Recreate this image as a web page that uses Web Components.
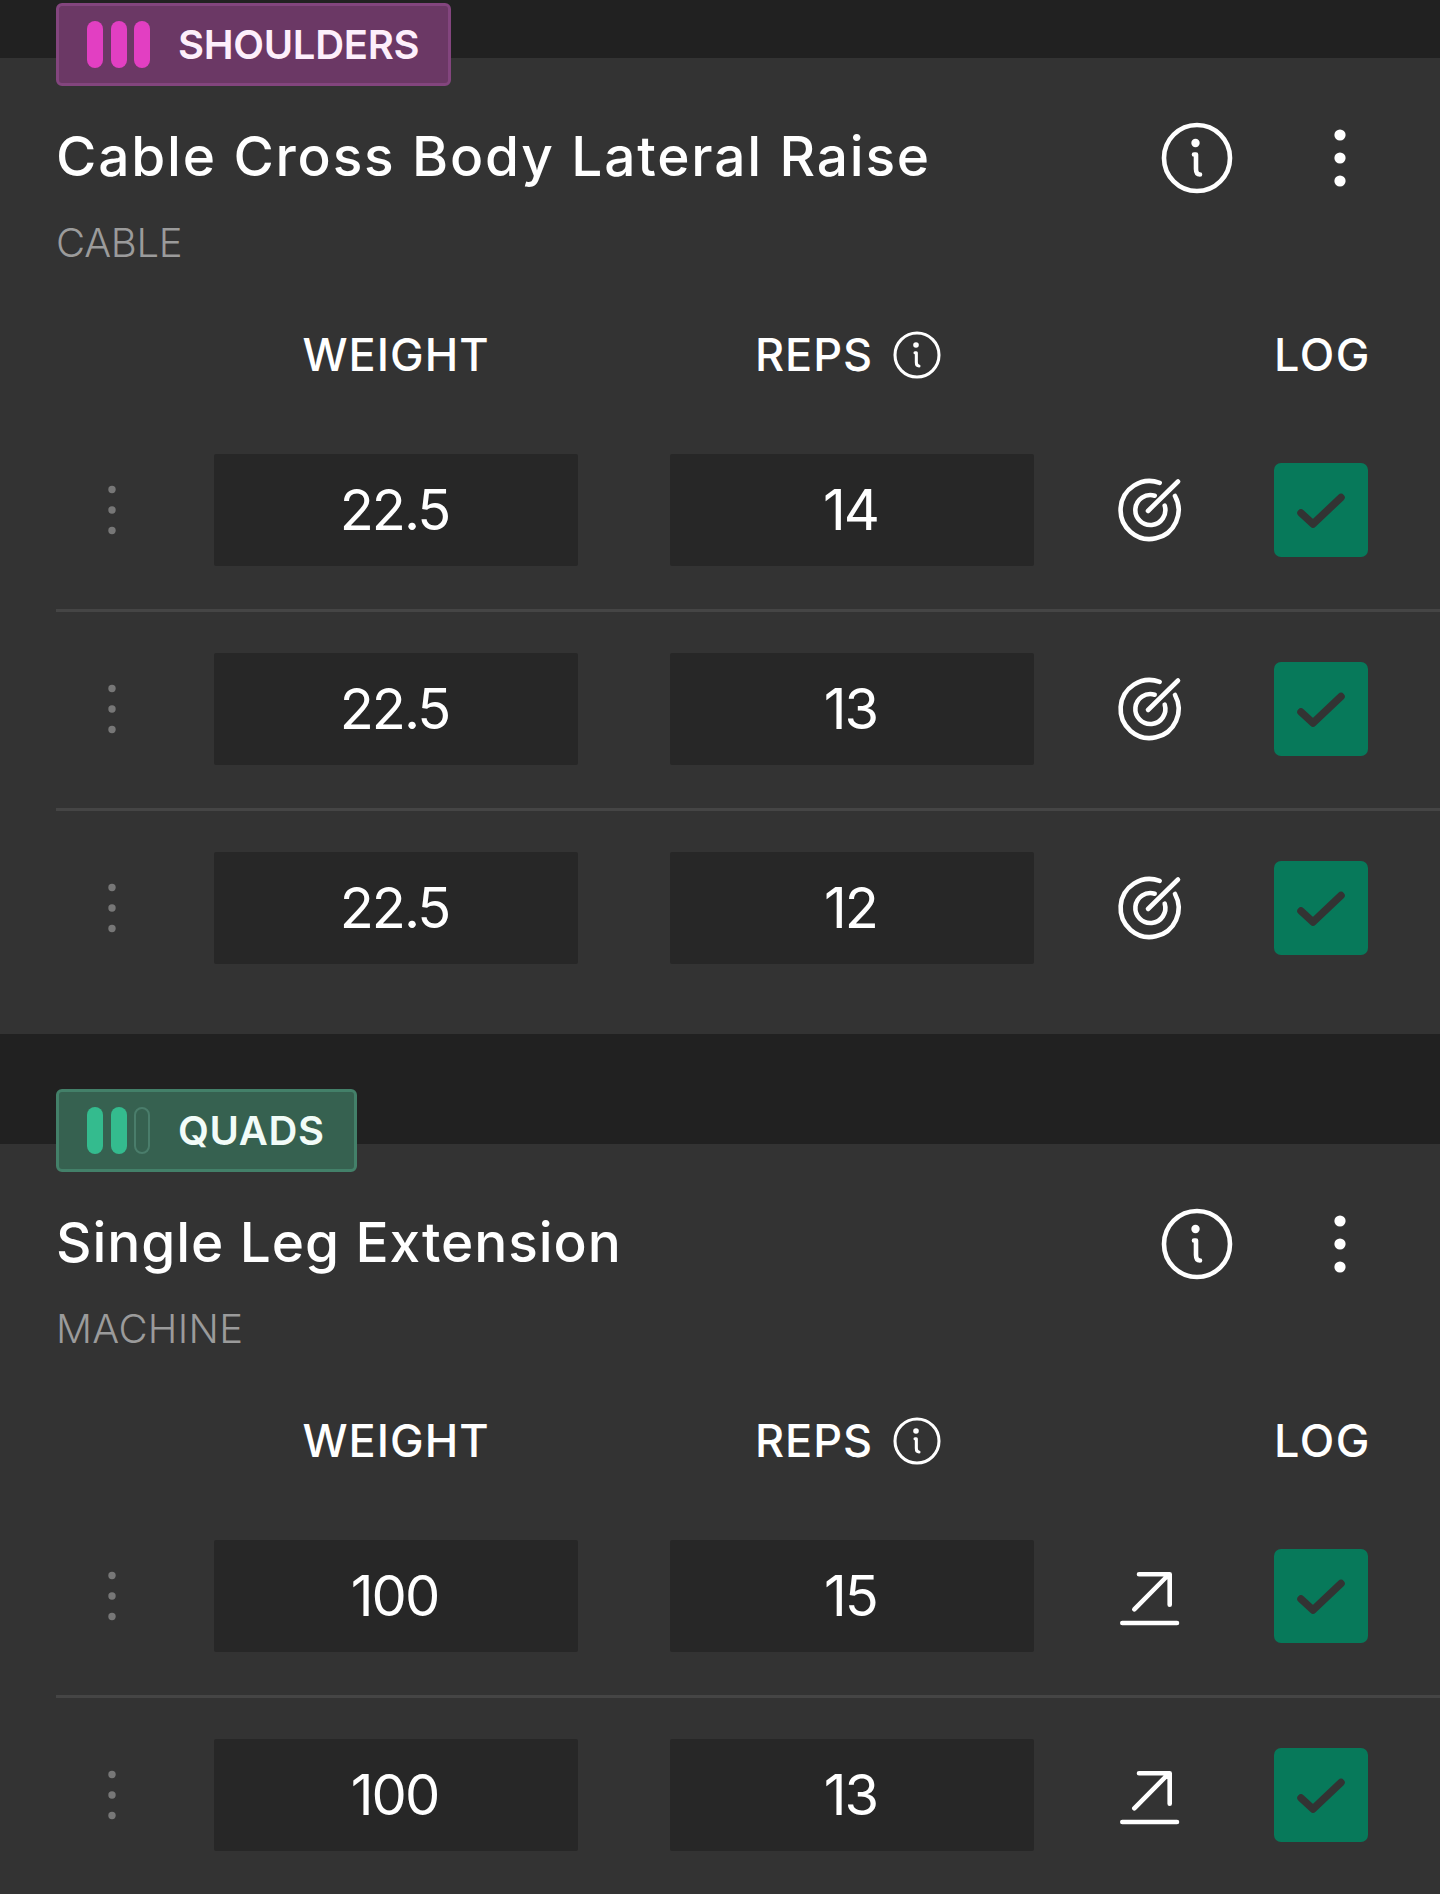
<!DOCTYPE html>
<html>
<head>
<meta charset="utf-8">
<title>Workout</title>
<style>
    html, body { margin: 0; height: 1894px; overflow: hidden; background: #212121; }
    body { font-family: Inter, "Liberation Sans", sans-serif; color: #fff; padding-top: 58px; box-sizing: border-box; }
</style>
</head>
<body>
<exercise-card title-text="Cable Cross Body Lateral Raise" gear="CABLE" style="--title-track:1.83px">
    <muscle-badge slot="badge" filled="3" color="#e23fc2" bg="#6b3865" edge="#83457e" ink="#fdeffb" off="#83457e">SHOULDERS</muscle-badge>
    <set-row weight="22.5" reps="14" icon="target"></set-row>
    <set-row weight="22.5" reps="13" icon="target"></set-row>
    <set-row weight="22.5" reps="12" icon="target" last></set-row>
</exercise-card>
<exercise-card title-text="Single Leg Extension" gear="MACHINE" style="--title-track:0.9px;--gear-track:0.3px;margin-top:110px">
    <muscle-badge slot="badge" filled="2" color="#34bb8e" bg="#366150" edge="#438069" ink="#f2fcf8" off="#4a7d6b" style="letter-spacing:0.6px">QUADS</muscle-badge>
    <set-row weight="100" reps="15" icon="trend"></set-row>
    <set-row weight="100" reps="13" icon="trend"></set-row>
</exercise-card>

<script>
// the shared icons, all on a 72 box
const ICONS = {
    info: `<svg viewBox="0 0 72 72" fill="none" stroke="currentColor" stroke-width="4.6" stroke-linecap="round" stroke-linejoin="round">
        <circle cx="36" cy="36" r="33"/>
        <circle cx="34.5" cy="21" r="4.2" fill="currentColor" stroke="none"/>
        <path d="M33 32.5H35V47Q35 52.5 39 52.5" stroke-width="4.6"/></svg>`,
    dots: `<svg viewBox="0 0 72 72" fill="currentColor">
        <circle cx="36" cy="13" r="5.6"/><circle cx="36" cy="36" r="5.6"/><circle cx="36" cy="59" r="5.6"/></svg>`,
    handle: `<svg viewBox="0 0 72 72" fill="currentColor">
        <circle cx="36" cy="15.5" r="3.7"/><circle cx="36" cy="36" r="3.7"/><circle cx="36" cy="56.5" r="3.7"/></svg>`,
    target: `<svg viewBox="0 0 72 72" fill="none" stroke="currentColor" stroke-width="4.6" stroke-linecap="round">
        <path d="M46.7 8.8A29 29 0 1 0 62 22"/>
        <path d="M41.7 21.7A15 15 0 1 0 51.7 31.7"/>
        <path d="M35 37L65 7.5"/></svg>`,
    trend: `<svg viewBox="0 0 72 72" fill="none" stroke="currentColor" stroke-width="4.6" stroke-linecap="round" stroke-linejoin="round">
        <path d="M21.3 49.3L55.3 15M26 14.3H56.7V44.7M9.3 63H64"/></svg>`,
};

// (CHILD) coloured tag that sits over the top edge of a card
class MuscleBadge extends HTMLElement {
    constructor() {
        super();
        this.attachShadow({ mode: 'open' });
    }

    connectedCallback() {
        const filled = parseInt(this.getAttribute('filled'), 10);
        const bars = [0, 1, 2].map((i) => `<i class="${i < filled ? 'on' : ''}"></i>`).join('');

        this.shadowRoot.innerHTML = `
        <style>
            :host {
                display: inline-flex;
                align-items: center;
                box-sizing: border-box;
                height: 83px;
                padding: 0 29px 0 28px;
                border: 3px solid ${this.getAttribute('edge')};
                border-radius: 6px;
                background: ${this.getAttribute('bg')};
                color: ${this.getAttribute('ink')};
                font-size: 40px;
                font-weight: 600;
                letter-spacing: -0.3px;
            }

            .bars {
                display: flex;
                gap: 7.5px;
                margin-right: 28px;
            }

            i {
                box-sizing: border-box;
                width: 16px;
                height: 47px;
                border-radius: 8px;
                border: 2px solid ${this.getAttribute('off')};
            }

            i.on {
                border: 0;
                background: ${this.getAttribute('color')};
            }
        </style>
        <div class="bars">${bars}</div>
        <slot></slot>`;
    }
}

// (CHILD) one logged set
class SetRow extends HTMLElement {
    constructor() {
        super();
        this.attachShadow({ mode: 'open' });
    }

    connectedCallback() {
        this.shadowRoot.innerHTML = `
        <style>
            :host {
                display: grid;
                grid-template-columns: 158px 364px 456px 230px 10px 94px;
                align-items: center;
                padding: 41px 0 43px;
                border-bottom: 3px solid #454545;
            }

            :host([last]) {
                border-bottom: 0;
            }

            .handle {
                width: 112px;
                height: 72px;
                color: #777;
                display: flex;
                justify-content: center;
            }

            .handle svg {
                width: 72px;
                height: 72px;
            }

            .box {
                display: flex;
                align-items: center;
                justify-content: center;
                box-sizing: border-box;
                width: 364px;
                height: 112px;
                padding: 0 3px 0 0;
                border-radius: 2px;
                background: #272727;
                font-size: 56px;
                font-weight: 400;
                letter-spacing: -2px;
            }

            .box + .box {
                justify-self: end;
            }

            .hint {
                justify-self: center;
                width: 72px;
                height: 72px;
                color: #fff;
            }

            .log {
                grid-column: 6;
                display: flex;
                width: 94px;
                height: 94px;
                border-radius: 7px;
                background: #07795a;
                color: #333;
            }

            svg {
                display: block;
            }
        </style>
        <div class="handle">${ICONS.handle}</div>
        <div class="box">${this.getAttribute('weight')}</div>
        <div class="box">${this.getAttribute('reps')}</div>
        <div class="hint">${ICONS[this.getAttribute('icon')]}</div>
        <div class="log">
            <svg viewBox="0 0 94 94" width="94" height="94" fill="none" stroke="currentColor" stroke-width="7.5" stroke-linecap="round" stroke-linejoin="round">
                <path d="M27 50L39 61L67 34.5"/>
            </svg>
        </div>`;
    }
}

// (PARENT) an exercise: badge, heading, column labels and its sets
class ExerciseCard extends HTMLElement {
    constructor() {
        super();
        this.attachShadow({ mode: 'open' });
    }

    connectedCallback() {
        this.shadowRoot.innerHTML = `
        <style>
            :host {
                display: flow-root;
                padding: 0 0 27px 56px;
                background: #333;
            }

            .badge {
                height: 83px;
                margin-top: -55px;
            }

            .head {
                display: flex;
                align-items: center;
                height: 72px;
                margin-top: 36px;
                padding-right: 64px;
            }

            h1 {
                flex: 1;
                margin: 0 0 5px;
                font-size: 55px;
                font-weight: 500;
                letter-spacing: var(--title-track);
            }

            .icon {
                width: 72px;
                height: 72px;
                margin-left: 71px;
            }

            .gear {
                height: 50px;
                margin-top: 24px;
                line-height: 50px;
                color: #9b9b9b;
                font-size: 40px;
                font-weight: 300;
                letter-spacing: var(--gear-track, -0.3px);
            }

            .labels {
                display: grid;
                grid-template-columns: 158px 364px 456px 240px 94px;
                align-items: center;
                height: 50px;
                margin: 59px 0 36px;
                font-size: 45px;
                font-weight: 500;
                letter-spacing: 1px;
                text-align: center;
            }

            .labels span:first-child {
                grid-column: 2;
            }

            .reps {
                justify-self: end;
                display: flex;
                align-items: center;
                justify-content: center;
                gap: 20px;
                width: 360px;
                margin-right: 6px;
            }

            .reps svg {
                width: 48px;
                height: 48px;
            }

            .log-label {
                letter-spacing: 1.6px;
            }
        </style>
        <div class="badge"><slot name="badge"></slot></div>
        <div class="head">
            <h1>${this.getAttribute('title-text')}</h1>
            <div class="icon">${ICONS.info}</div>
            <div class="icon">${ICONS.dots}</div>
        </div>
        <div class="gear">${this.getAttribute('gear')}</div>
        <div class="labels">
            <span>WEIGHT</span>
            <div class="reps"><span>REPS</span>${ICONS.info}</div>
            <span style="grid-column:4"></span>
            <span class="log-label">LOG</span>
        </div>
        <slot></slot>`;
    }
}

// set the element names for our components
customElements.define('muscle-badge', MuscleBadge);
customElements.define('set-row', SetRow);
customElements.define('exercise-card', ExerciseCard);
</script>
</body>
</html>
